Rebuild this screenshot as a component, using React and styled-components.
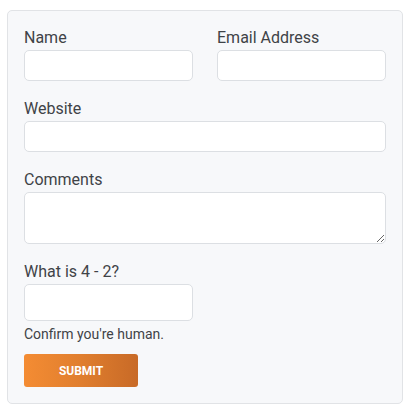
import React from "react";
import styled, { createGlobalStyle } from "styled-components";

const Global = createGlobalStyle`
  html, body { margin: 0; padding: 0; background: #ffffff; }
  body { font-family: Roboto, "Open Sans", Arial, sans-serif; }
  * { box-sizing: border-box; }
`;

const Page = styled.div`
  padding: 10px 7px 8px 7px;
`;

const Card = styled.form`
  width: 396px;
  background: #f7f8fa;
  border: 1px solid #e1e3e6;
  border-radius: 5px;
  padding: 17px 16px 16px 16px;
  display: flex;
  flex-direction: column;
  gap: 18px;
`;

const Row = styled.div`
  display: grid;
  grid-template-columns: 169px 169px;
  column-gap: 24px;
`;

const Field = styled.div`
  display: flex;
  flex-direction: column;
  gap: 3px;
`;

const Label = styled.label`
  font-size: 16px;
  line-height: 19px;
  color: #3f4347;
`;

const Input = styled.input`
  width: ${(p) => (p.$w ? p.$w : "100%")};
  height: ${(p) => (p.$h ? p.$h : "31px")};
  background: #ffffff;
  border: 1px solid #dcdfe3;
  border-radius: 5px;
  padding: 0 8px;
  font: inherit;
  outline: none;
`;

const TextArea = styled.textarea`
  width: 100%;
  height: 52px;
  background: #ffffff;
  border: 1px solid #dcdfe3;
  border-radius: 5px;
  padding: 6px 8px;
  font: inherit;
  outline: none;
  display: block;
  resize: both;
`;

const Help = styled.div`
  font-size: 14px;
  line-height: 16px;
  color: #3f4347;
  margin-top: 2px;
`;

const Submit = styled.button`
  margin-top: -6px;
  width: 114px;
  height: 33px;
  border: none;
  border-radius: 3px;
  background: linear-gradient(90deg, #f48c33 0%, #e07e2e 50%, #c86a27 100%);
  color: #ffffff;
  font-family: Roboto, Arial, sans-serif;
  font-weight: 700;
  font-size: 12px;
  text-transform: uppercase;
  letter-spacing: 0;
  cursor: pointer;
  align-self: flex-start;
`;

export default function App() {
  return (
    <>
      <Global />
      <Page>
        <Card onSubmit={(e) => e.preventDefault()}>
          <Row>
            <Field>
              <Label>Name</Label>
              <Input type="text" />
            </Field>
            <Field>
              <Label>Email Address</Label>
              <Input type="email" />
            </Field>
          </Row>
          <Field>
            <Label>Website</Label>
            <Input type="text" />
          </Field>
          <Field>
            <Label>Comments</Label>
            <TextArea />
          </Field>
          <Field>
            <Label>What is 4 - 2?</Label>
            <Input type="text" $w="169px" $h="37px" />
            <Help>Confirm you're human.</Help>
          </Field>
          <Submit type="submit">Submit</Submit>
        </Card>
      </Page>
    </>
  );
}
